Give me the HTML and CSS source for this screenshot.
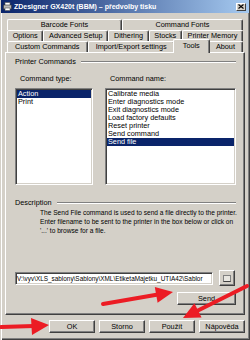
FILE: index.html
```html
<!DOCTYPE html>
<html lang="cs">
<head>
    <meta charset="UTF-8">
    <title>ZDesigner GX420t (BBM) – předvolby tisku</title>
    <link rel="stylesheet" href="styles.css">
</head>
<body>
    <div class="window">
        <div class="titlebar">
            <svg class="app-icon" width="9" height="9" viewBox="0 0 9 9">
                <rect x="2" y="0.5" width="5" height="3" fill="#fff" stroke="#555" stroke-width="0.6"/>
                <rect x="0.5" y="3" width="8" height="4" fill="#b8b8b8" stroke="#333" stroke-width="0.6"/>
                <rect x="2" y="6" width="5" height="2.5" fill="#fff" stroke="#555" stroke-width="0.6"/>
            </svg>
            <span class="title">ZDesigner GX420t (BBM) – předvolby tisku</span>
            <span class="close-btn">
                <svg width="6" height="5" viewBox="0 0 6 5">
                    <path d="M0.5 0.5 L5.5 4.5 M5.5 0.5 L0.5 4.5" stroke="#000" stroke-width="1.1"/>
                </svg>
            </span>
        </div>

        <div class="tabs">
            <div class="tab-row">
                <div class="tab">Barcode Fonts</div>
                <div class="tab">Command Fonts</div>
            </div>
            <div class="tab-row">
                <div class="tab">Options</div>
                <div class="tab">Advanced Setup</div>
                <div class="tab">Dithering</div>
                <div class="tab">Stocks</div>
                <div class="tab">Printer Memory</div>
            </div>
            <div class="tab-row">
                <div class="tab">Custom Commands</div>
                <div class="tab">Import/Export settings</div>
                <div class="tab active">Tools</div>
                <div class="tab">About</div>
            </div>
        </div>

        <div class="panel">
            <div class="section-head">
                <span>Printer Commands</span>
                <span class="etch"></span>
            </div>

            <div class="commands">
                <div class="col col-type">
                    <div class="col-label">Command type:</div>
                    <div class="listbox">
                        <div class="item selected">Action</div>
                        <div class="item">Print</div>
                    </div>
                </div>
                <div class="col col-name">
                    <div class="col-label">Command name:</div>
                    <div class="listbox">
                        <div class="item">Calibrate media</div>
                        <div class="item">Enter diagnostics mode</div>
                        <div class="item">Exit diagnostics mode</div>
                        <div class="item">Load factory defaults</div>
                        <div class="item">Reset printer</div>
                        <div class="item">Send command</div>
                        <div class="item selected">Send file</div>
                    </div>
                </div>
            </div>

            <div class="section-head desc-head">
                <span>Description</span>
                <span class="etch"></span>
            </div>
            <p class="description">
                The Send File command is used to send a file directly to the printer.<br>
                Enter filename to be sent to the printer in the box below or click on<br>
                '...' to browse for a file.
            </p>

            <div class="file-row">
                <div class="file-input">V:\vyv\XLS_sablony\Sablony\XML\EtiketaMajetku_UTIA42\Sablor</div>
                <div class="browse-btn"><span class="browse-glyph"></span></div>
            </div>
            <div class="send-row">
                <div class="btn send-btn">Send</div>
            </div>
        </div>

        <div class="dialog-buttons">
            <div class="btn">OK</div>
            <div class="btn">Storno</div>
            <div class="btn">Použít</div>
            <div class="btn">Nápověda</div>
        </div>

        <svg class="arrows" width="250" height="340" viewBox="0 0 250 340">
            <!-- to OK -->
            <path d="M1 327 L34 326" stroke="#ec1c24" stroke-width="4" stroke-linecap="round"/>
            <polygon points="49,325 31,318 32,335" fill="#ec1c24"/>
            <!-- to Send -->
            <path d="M103 304 L158 294.5" stroke="#ec1c24" stroke-width="4" stroke-linecap="round"/>
            <polygon points="173,292 154.8,287 157.6,302.8" fill="#ec1c24"/>
            <!-- to Použít -->
            <path d="M247 286 L196 311.5" stroke="#ec1c24" stroke-width="4" stroke-linecap="round"/>
            <polygon points="183,318 194.4,303.2 201.6,317.6" fill="#ec1c24"/>
        </svg>
    </div>
</body>
</html>
```

FILE: styles.css
```css
body {
    margin: 0;
    background-color: #d4d0c8;
    font-family: "Liberation Sans", Arial, sans-serif;
    font-size: 7.3px;
    color: #000;
}
.window {
    position: relative;
    width: 250px;
    height: 340px;
    box-sizing: border-box;
    background-color: #d4d0c8;
    box-shadow: inset 1px 0 #d4d0c8, inset 2px 0 #fff, inset -1px -1px #404040, inset -2px -2px #808080;
    display: flex;
    flex-direction: column;
    overflow: hidden;
}
.titlebar {
    height: 13px;
    margin: 0 1px 0 1px;
    padding: 0 3px 0 2px;
    background: linear-gradient(to right, #0a246a, #a6caf0);
    display: flex;
    align-items: center;
    gap: 2px;
}
.app-icon {
    flex: none;
}
.title {
    flex: 1;
    color: #fff;
    font-weight: bold;
    font-size: 7px;
    white-space: nowrap;
}
.close-btn {
    width: 10px;
    height: 8px;
    box-sizing: border-box;
    background-color: #d4d0c8;
    border: 1px solid;
    border-color: #fff #404040 #404040 #fff;
    display: flex;
    align-items: center;
    justify-content: center;
}
.tabs {
    margin-top: 6px;
    padding: 0 7px;
}
.tab-row {
    display: flex;
    height: 11px;
}
.tab {
    flex: 1 1 auto;
    box-sizing: border-box;
    height: 11px;
    border-top: 1px solid #fff;
    border-left: 1px solid #fff;
    border-right: 1px solid #404040;
    box-shadow: inset -1px 0 #808080;
    border-radius: 2px 2px 0 0;
    text-align: center;
    line-height: 10px;
    white-space: nowrap;
}
.tab.active {
    position: relative;
    z-index: 2;
    height: 14px;
    margin: -2px -2px -1px;
    padding: 0 2px;
    background-color: #d4d0c8;
    line-height: 12px;
}
.panel {
    height: 263px;
    margin: 0 5px;
    box-sizing: border-box;
    border: 1px solid;
    border-color: #fff #404040 #404040 #fff;
    box-shadow: inset -1px -1px #808080;
    display: flex;
    flex-direction: column;
}
.section-head {
    display: flex;
    align-items: center;
    gap: 5px;
    height: 8px;
    margin-top: 5px;
    padding: 0 8px 0 9px;
    line-height: 8px;
    white-space: nowrap;
}
.etch {
    flex: 1;
    height: 1px;
    background-color: #808080;
    border-bottom: 1px solid #fff;
}
.commands {
    display: flex;
    margin-top: 9px;
    padding-left: 9px;
    gap: 12px;
}
.col-type {
    width: 78px;
}
.col-name {
    width: 131px;
}
.col-label {
    padding-left: 5px;
    height: 8px;
    line-height: 8px;
    margin-bottom: 5px;
}
.listbox {
    height: 97px;
    box-sizing: border-box;
    background-color: #fff;
    border: 1px solid;
    border-color: #808080 #fff #fff #808080;
    box-shadow: inset 1px 1px #404040, inset -1px -1px #d4d0c8;
    padding: 1px 1px;
}
.item {
    height: 8px;
    line-height: 8px;
    padding-left: 1px;
    white-space: nowrap;
}
.item.selected {
    background-color: #0a246a;
    color: #fff;
}
.desc-head {
    margin-top: 14px;
}
.description {
    margin: 1px 0 0;
    padding-left: 34px;
    font-size: 6.6px;
    line-height: 9px;
    white-space: nowrap;
}
.file-row {
    display: flex;
    align-items: center;
    gap: 6px;
    margin-top: 35px;
    padding-left: 9px;
}
.file-input {
    width: 198px;
    height: 13px;
    box-sizing: border-box;
    background-color: #fff;
    border: 1px solid;
    border-color: #808080 #fff #fff #808080;
    box-shadow: inset 1px 1px #404040, inset -1px -1px #d4d0c8;
    padding: 0 1px;
    font-size: 6.4px;
    line-height: 11px;
    white-space: nowrap;
}
.browse-btn {
    width: 16px;
    height: 16px;
    box-sizing: border-box;
    border: 1px solid;
    border-color: #fff #404040 #404040 #fff;
    box-shadow: inset -1px -1px #808080;
    display: flex;
    align-items: center;
    justify-content: center;
}
.browse-glyph {
    width: 8px;
    height: 7px;
    box-sizing: border-box;
    border: 1px solid #808080;
    border-bottom-color: #404040;
    background-color: #e8e6e0;
}
.send-row {
    display: flex;
    justify-content: flex-end;
    margin-top: 6px;
    padding-right: 8px;
}
.btn {
    width: 46px;
    height: 13px;
    box-sizing: border-box;
    background-color: #d4d0c8;
    border: 1px solid;
    border-color: #fff #404040 #404040 #fff;
    box-shadow: inset -1px -1px #808080;
    text-align: center;
    line-height: 11px;
    white-space: nowrap;
}
.send-btn {
    width: 59px;
}
.dialog-buttons {
    display: flex;
    justify-content: flex-end;
    gap: 4px;
    margin-top: 5px;
    padding-right: 5px;
}
.arrows {
    position: absolute;
    top: 0;
    left: 0;
    pointer-events: none;
}
```
